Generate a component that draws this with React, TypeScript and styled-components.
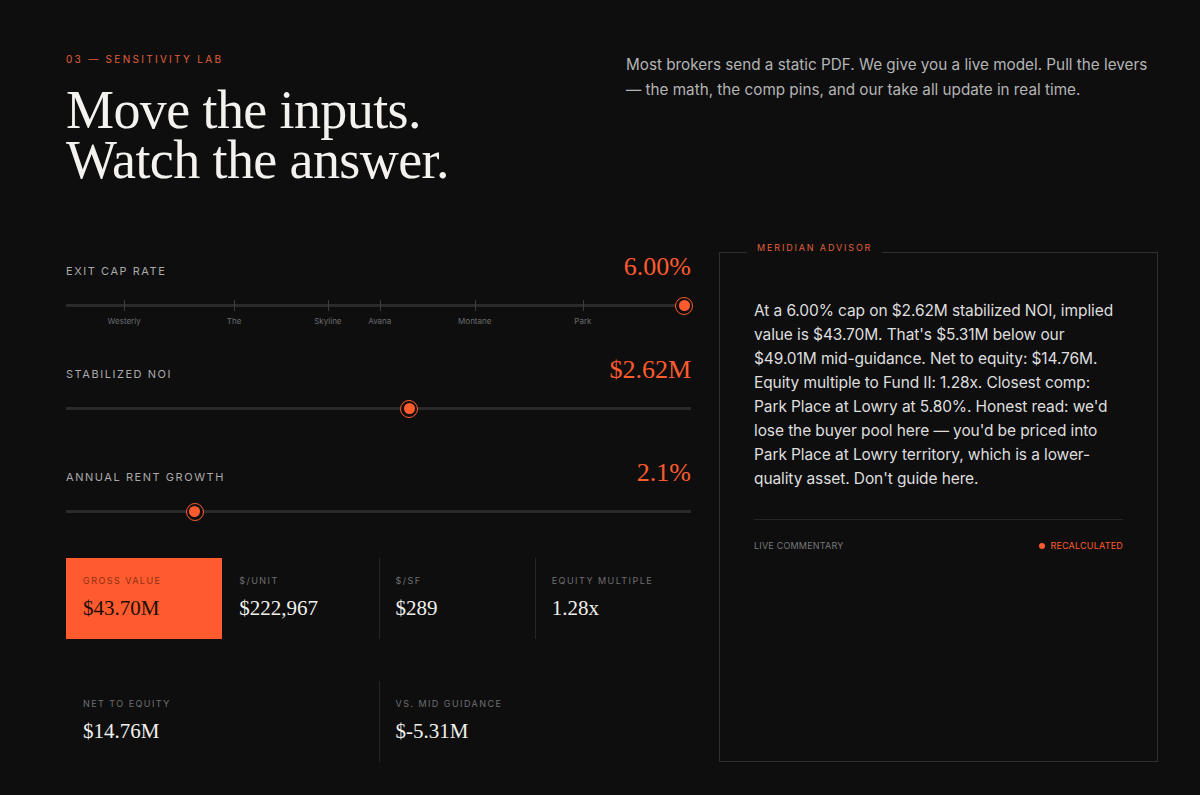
import React from "react";
import styled, { createGlobalStyle } from "styled-components";

const ORANGE = "#ff5b2e";
const BG = "#0e0e0f";

const GlobalStyle = createGlobalStyle`
  html, body {
    margin: 0;
    padding: 0;
    background: ${BG};
  }
  body {
    font-family: Inter, "Noto Sans", sans-serif;
    color: #e6e6e6;
    -webkit-font-smoothing: antialiased;
  }
`;

const Page = styled.main`
  width: 1092px;
  padding: 52px 0 33px 66px;
`;

const Intro = styled.header`
  display: grid;
  grid-template-columns: 1fr 1fr;
  column-gap: 28px;
  align-items: start;
`;

const Eyebrow = styled.div`
  font-size: 10px;
  line-height: 14px;
  letter-spacing: 2.3px;
  color: #e0603a;
  text-transform: uppercase;
`;

const Title = styled.h2`
  margin: 19px 0 0;
  font-family: "Liberation Serif", "DejaVu Serif", serif;
  font-weight: 400;
  font-size: 54px;
  line-height: 50px;
  letter-spacing: -0.6px;
  color: #f4f2ee;
`;

const Lede = styled.p`
  margin: 0;
  max-width: 530px;
  font-size: 15.25px;
  line-height: 25px;
  color: #b4b4b4;
`;

const Lab = styled.section`
  display: grid;
  grid-template-columns: 625px 1fr;
  column-gap: 28px;
  margin-top: 67px;
`;

const Controls = styled.div`
  display: flex;
  flex-direction: column;
`;

const SliderList = styled.div`
  display: flex;
  flex-direction: column;
  gap: 48px;
`;

const SliderHead = styled.div`
  display: flex;
  justify-content: space-between;
  align-items: baseline;
  height: 30px;
`;

const SliderLabel = styled.span`
  font-size: 11px;
  letter-spacing: 1.55px;
  color: #a9a9a9;
  text-transform: uppercase;
`;

const SliderValue = styled.span`
  font-family: "Liberation Serif", "DejaVu Serif", serif;
  font-size: 26px;
  line-height: 30px;
  color: ${ORANGE};
`;

const Track = styled.div`
  position: relative;
  margin-top: 22px;
  height: 3px;
  background: #2a2a2a;
`;

const Tick = styled.div`
  position: absolute;
  top: -4px;
  width: 1px;
  height: 11px;
  background: #3c3c3c;
`;

const TickLabel = styled.span`
  position: absolute;
  top: 16px;
  left: 0;
  transform: translateX(-50%);
  font-size: 8px;
  line-height: 10px;
  color: #6c6c6c;
  white-space: nowrap;
`;

const Thumb = styled.span`
  position: absolute;
  top: 50%;
  width: 18px;
  height: 18px;
  box-sizing: border-box;
  border-radius: 50%;
  border: 1.5px solid ${ORANGE};
  background: ${BG};
  transform: translate(-50%, -50%);

  &::after {
    content: "";
    position: absolute;
    inset: 2.5px;
    border-radius: 50%;
    background: ${ORANGE};
  }
`;

const Stats = styled.div`
  display: grid;
  grid-template-columns: repeat(4, 1fr);
  row-gap: 42px;
  margin-top: 45px;
`;

const StatCell = styled.div<{ $span?: number; $divided?: boolean; $accent?: boolean }>`
  grid-column: span ${(p) => p.$span ?? 1};
  padding: 17px 17px 18px 16px;
  border-left: 1px solid ${(p) => (p.$divided ? "#262626" : "transparent")};
  background: ${(p) => (p.$accent ? ORANGE : "transparent")};
`;

const StatLabel = styled.div<{ $accent?: boolean }>`
  font-size: 9px;
  line-height: 12px;
  letter-spacing: 1.45px;
  text-transform: uppercase;
  color: ${(p) => (p.$accent ? "#8e2e14" : "#6f6f6f")};
`;

const StatValue = styled.div<{ $accent?: boolean }>`
  margin-top: 8px;
  font-family: "Liberation Serif", "DejaVu Serif", serif;
  font-size: 21px;
  line-height: 26px;
  color: ${(p) => (p.$accent ? "#1c0d08" : "#f1f0ec")};
`;

const Advisor = styled.aside`
  position: relative;
  border: 1px solid #2f2f2f;
  padding: 46px 34px 0;
`;

const AdvisorTag = styled.span`
  position: absolute;
  top: -11px;
  left: 27px;
  padding: 0 10px;
  background: ${BG};
  font-size: 9px;
  line-height: 12px;
  letter-spacing: 1.85px;
  color: #e0603a;
  text-transform: uppercase;
`;

const Commentary = styled.p`
  margin: 0;
  font-size: 15.5px;
  line-height: 24px;
  letter-spacing: -0.1px;
  color: #dedede;
`;

const AdvisorFoot = styled.div`
  display: flex;
  justify-content: space-between;
  align-items: center;
  margin-top: 28px;
  padding-top: 20px;
  border-top: 1px solid #262626;
  font-size: 9px;
  line-height: 12px;
  letter-spacing: 0.2px;
  text-transform: uppercase;
`;

const FootNote = styled.span`
  color: #777;
`;

const Status = styled.span`
  display: flex;
  align-items: center;
  gap: 5px;
  color: ${ORANGE};

  &::before {
    content: "";
    width: 6px;
    height: 6px;
    border-radius: 50%;
    background: ${ORANGE};
  }
`;

type Pin = { name: string; at: number };

type SliderProps = {
  label: string;
  value: string;
  position: number;
  pins?: Pin[];
};

const Slider = ({ label, value, position, pins = [] }: SliderProps) => (
  <div>
    <SliderHead>
      <SliderLabel>{label}</SliderLabel>
      <SliderValue>{value}</SliderValue>
    </SliderHead>
    <Track>
      {pins.map((pin) => (
        <Tick key={pin.name} style={{ left: `${pin.at}%` }}>
          <TickLabel>{pin.name}</TickLabel>
        </Tick>
      ))}
      <Thumb style={{ left: `${position}%` }} />
    </Track>
  </div>
);

const compPins: Pin[] = [
  { name: "Westerly", at: 9.3 },
  { name: "The", at: 26.9 },
  { name: "Skyline", at: 41.9 },
  { name: "Avana", at: 50.2 },
  { name: "Montane", at: 65.4 },
  { name: "Park", at: 82.7 },
];

const App = () => (
  <>
    <GlobalStyle />
    <Page>
      <Intro>
        <div>
          <Eyebrow>03 — Sensitivity Lab</Eyebrow>
          <Title>
            Move the inputs.
            <br />
            Watch the answer.
          </Title>
        </div>
        <Lede>
          Most brokers send a static PDF. We give you a live model. Pull the levers — the math,
          the comp pins, and our take all update in real time.
        </Lede>
      </Intro>

      <Lab>
        <Controls>
          <SliderList>
            <Slider label="Exit Cap Rate" value="6.00%" position={98.9} pins={compPins} />
            <Slider label="Stabilized NOI" value="$2.62M" position={54.9} />
            <Slider label="Annual Rent Growth" value="2.1%" position={20.6} />
          </SliderList>

          <Stats>
            <StatCell $accent>
              <StatLabel $accent>Gross Value</StatLabel>
              <StatValue $accent>$43.70M</StatValue>
            </StatCell>
            <StatCell>
              <StatLabel>$/Unit</StatLabel>
              <StatValue>$222,967</StatValue>
            </StatCell>
            <StatCell $divided>
              <StatLabel>$/SF</StatLabel>
              <StatValue>$289</StatValue>
            </StatCell>
            <StatCell $divided>
              <StatLabel>Equity Multiple</StatLabel>
              <StatValue>1.28x</StatValue>
            </StatCell>
            <StatCell $span={2}>
              <StatLabel>Net to Equity</StatLabel>
              <StatValue>$14.76M</StatValue>
            </StatCell>
            <StatCell $span={2} $divided>
              <StatLabel>Vs. Mid Guidance</StatLabel>
              <StatValue>$-5.31M</StatValue>
            </StatCell>
          </Stats>
        </Controls>

        <Advisor>
          <AdvisorTag>Meridian Advisor</AdvisorTag>
          <Commentary>
            At a 6.00% cap on $2.62M stabilized NOI, implied value is $43.70M. That's $5.31M below
            our $49.01M mid-guidance. Net to equity: $14.76M. Equity multiple to Fund II: 1.28x.
            Closest comp: Park Place at Lowry at 5.80%. Honest read: we'd lose the buyer pool here
            — you'd be priced into Park Place at Lowry territory, which is a lower-quality asset.
            Don't guide here.
          </Commentary>
          <AdvisorFoot>
            <FootNote>Live commentary</FootNote>
            <Status>Recalculated</Status>
          </AdvisorFoot>
        </Advisor>
      </Lab>
    </Page>
  </>
);

export default App;
